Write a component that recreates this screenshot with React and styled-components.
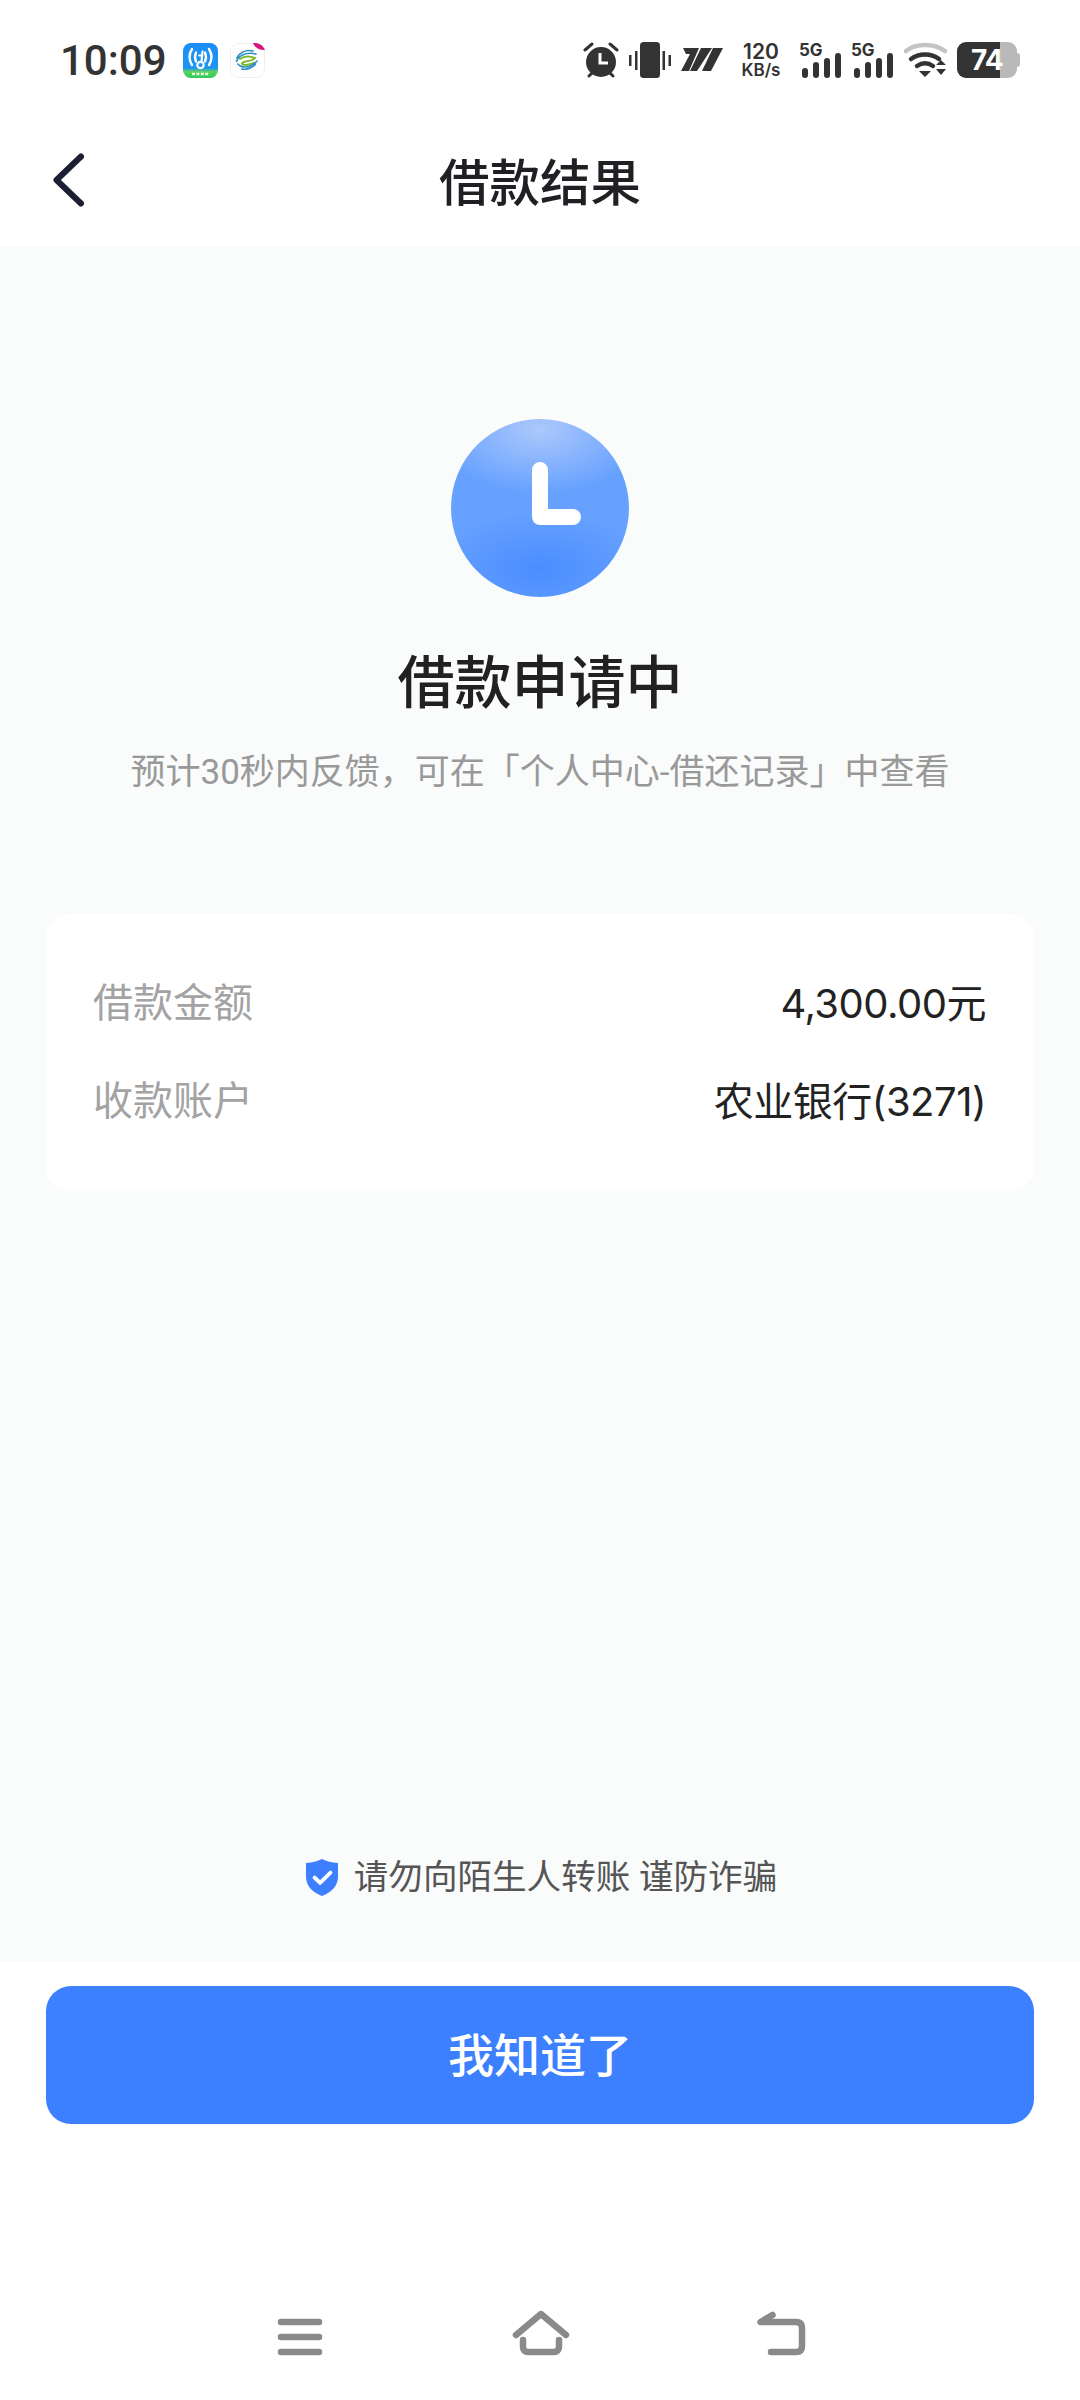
import React from "react";
import styled, { createGlobalStyle } from "styled-components";

const Global = createGlobalStyle`
  html, body { margin: 0; padding: 0; background: #fff; }
  * { box-sizing: border-box; }
  body { font-family: Roboto, "Noto Sans CJK SC", sans-serif; }
`;

const Page = styled.div`
  width: 1080px;
  height: 2400px;
  display: flex;
  flex-direction: column;
  overflow: hidden;
  background: #fff;
`;

const StatusBar = styled.div`
  height: 120px;
  padding: 0 60px;
  display: flex;
  align-items: center;
  justify-content: space-between;
`;

const StatusLeft = styled.div`
  display: flex;
  align-items: center;
`;

const Time = styled.span`
  font-family: Roboto, sans-serif;
  font-size: 42px;
  font-weight: 500;
  color: #333;
  width: 123px;
`;

const AppIcon = styled.svg`
  width: 35px;
  height: 35px;
  margin-right: 12px;
  display: block;
`;

const StatusRight = styled.div`
  display: flex;
  align-items: center;
`;

const StatusIcon = styled.svg`
  display: block;
  margin-left: ${(p) => p.$gap || 0}px;
  fill: #333;
`;

const Speed = styled.div`
  margin-left: 16px;
  width: 44px;
  display: flex;
  flex-direction: column;
  align-items: center;
  color: #333;
  font-family: Inter, Roboto, sans-serif;
  font-weight: 600;
`;

const SpeedValue = styled.span`
  font-size: 21px;
  line-height: 21px;
`;

const SpeedUnit = styled.span`
  font-size: 17px;
  line-height: 17px;
  white-space: nowrap;
`;

const Network = styled.div`
  position: relative;
  width: 42px;
  height: 36px;
  margin-left: ${(p) => p.$gap}px;
`;

const NetworkLabel = styled.span`
  position: absolute;
  left: 0;
  top: 0;
  color: #333;
  font-family: Inter, Roboto, sans-serif;
  font-size: 17px;
  line-height: 16px;
  font-weight: 700;
`;

const Battery = styled.div`
  margin-left: 10px;
  position: relative;
  width: 63px;
  height: 36px;
`;

const BatteryBody = styled.div`
  width: 60px;
  height: 36px;
  border-radius: 9px;
  background: linear-gradient(to right, #333 0 72%, #b9b9b9 72% 100%);
`;

const BatteryCap = styled.div`
  position: absolute;
  right: 0;
  top: 11px;
  width: 3px;
  height: 14px;
  border-radius: 0 3px 3px 0;
  background: #b9b9b9;
`;

const BatteryText = styled.span`
  position: absolute;
  left: 14px;
  top: 0;
  line-height: 36px;
  color: #fff;
  font-family: Inter, Roboto, sans-serif;
  font-weight: 700;
  font-size: 28px;
  letter-spacing: -1px;
`;

const NavBar = styled.div`
  height: 126px;
  position: relative;
  display: flex;
  align-items: center;
  justify-content: center;
  padding-bottom: 9px;
`;

const BackButton = styled.svg`
  position: absolute;
  left: 50px;
  top: 30px;
  width: 40px;
  height: 60px;
`;

const NavTitle = styled.h1`
  margin: 0;
  font-size: 50.500px;
  font-weight: 500;
  color: #1f2024;
`;

const Content = styled.main`
  flex: 1;
  background: #fafbfb;
  display: flex;
  flex-direction: column;
  align-items: center;
  padding: 173px 46px 0;
`;

const ClockBadge = styled.div`
  width: 178px;
  height: 178px;
  border-radius: 50%;
  background:
    radial-gradient(ellipse 60% 36% at 50% 6%, #acc8fb 0%, rgba(172, 200, 251, 0) 100%),
    radial-gradient(ellipse 62% 32% at 50% 84%, #4a8dff 0%, rgba(74, 141, 255, 0) 100%),
    #66a1ff;
  display: flex;
  align-items: center;
  justify-content: center;
`;

const ClockHands = styled.svg`
  width: 178px;
  height: 178px;
`;

const ResultTitle = styled.h2`
  margin: 52px 0 0;
  font-size: 57px;
  line-height: 70px;
  font-weight: 500;
  color: #212121;
`;

const ResultHint = styled.p`
  margin: 31px 0 0;
  font-size: 35px;
  line-height: 46px;
  font-weight: 400;
  color: #999;
  white-space: nowrap;
`;

const Card = styled.section`
  margin-top: 118px;
  width: 100%;
  height: 277px;
  border-radius: 24px;
  background: #fff;
  padding: 65px 48px 0 47px;
  display: flex;
  flex-direction: column;
  gap: 48px;
`;

const Row = styled.div`
  height: 50px;
  display: flex;
  align-items: center;
  justify-content: space-between;
  font-size: 40px;
  line-height: 50px;
`;

const RowLabel = styled.span`
  color: #a3a3a3;
`;

const RowValue = styled.span`
  color: #222;
  font-family: Inter, "Noto Sans CJK SC", sans-serif;
  letter-spacing: -0.5px;
`;

const Notice = styled.div`
  margin: auto 0 62px 3px;
  display: flex;
  align-items: center;
  gap: 16px;
  font-size: 34.600px;
  line-height: 46px;
  color: #555;
`;

const Shield = styled.svg`
  width: 32px;
  height: 37px;
`;

const Footer = styled.footer`
  height: 438px;
  padding: 24px 46px 0;
  display: flex;
  flex-direction: column;
  background: #fff;
`;

const PrimaryButton = styled.button`
  width: 100%;
  height: 138px;
  border: none;
  border-radius: 25px;
  background: #3c80ff;
  color: #fff;
  font-family: inherit;
  font-size: 46px;
  font-weight: 500;
  padding: 0 0 6px;
`;

const GestureBar = styled.nav`
  margin-top: 184px;
  margin-left: 1px;
  display: flex;
  justify-content: center;
  align-items: center;
  gap: 185px;
`;

const GestureIcon = styled.svg`
  width: ${(p) => p.$w}px;
  height: 52px;
  fill: none;
  stroke: #8a8a8a;
  stroke-width: 6.500;
  stroke-linecap: round;
  stroke-linejoin: round;
`;

const WifiKey = () => (
  <AppIcon viewBox="0 0 35 35">
    <defs>
      <linearGradient id="wk" x1="0" y1="0" x2="0" y2="1">
        <stop offset="0" stopColor="#1b8df5" />
        <stop offset="0.72" stopColor="#1e96f0" />
        <stop offset="0.82" stopColor="#5fd35a" />
        <stop offset="1" stopColor="#2cc95f" />
      </linearGradient>
    </defs>
    <rect width="35" height="35" rx="8" fill="url(#wk)" />
    <g fill="none" stroke="#fff" strokeLinecap="round">
      <path d="M9 6Q4 14 9 22" strokeWidth="2.400" />
      <path d="M26 6Q31 14 26 22" strokeWidth="2.400" />
      <path d="M13 9.500Q11 14 13 18.500" strokeWidth="2.400" />
      <path d="M22 9.500Q24 14 22 18.500" strokeWidth="2.400" />
      <circle cx="17.500" cy="22" r="3.200" strokeWidth="2.200" />
      <path d="M18.500 19L19.500 8.500M19.200 12.500h-3" strokeWidth="2.200" />
    </g>
    <path d="M9 31h17" stroke="#e8fbe2" strokeWidth="2.400" strokeDasharray="3 1.400" />
  </AppIcon>
);

const MobileLogo = () => (
  <AppIcon viewBox="0 0 35 35">
    <rect x="0.5" y="0.5" width="34" height="34" rx="8" fill="#fff" stroke="#eee" />
    <g fill="none" strokeLinecap="round">
      <path d="M7 15C9 10 16 6 23 8" stroke="#2a8dc9" strokeWidth="1.600" />
      <path d="M6.500 18.500C8 13 16 8.500 26 11" stroke="#2a8dc9" strokeWidth="1.600" />
      <path d="M10 16c4-3 10-3 15-1-3 4-10 2-13 5-1 2 6 3 12 0" stroke="#7dbb2e" strokeWidth="2" />
      <path d="M8 21c3 4 12 5 19-3" stroke="#2a8dc9" strokeWidth="1.600" />
      <path d="M11.500 26c5 1 11-1 14-5" stroke="#2a8dc9" strokeWidth="1.600" />
    </g>
    <path d="M23 0c5 0 9 1 12 7-5 0-10-2-12-7z" fill="#d9127f" />
  </AppIcon>
);

const FiveG = ({ gap }) => (
  <Network $gap={gap}>
    <NetworkLabel>5G</NetworkLabel>
    <StatusIcon width="42" height="36" viewBox="0 0 42 36">
      <rect x="3" y="26" width="6" height="10" rx="3" />
      <rect x="14" y="20" width="6" height="16" rx="3" />
      <rect x="25" y="16" width="6" height="20" rx="3" />
      <rect x="36" y="11" width="6" height="25" rx="3" />
    </StatusIcon>
  </Network>
);

export default function App() {
  return (
    <Page>
      <Global />
      <StatusBar>
        <StatusLeft>
          <Time>10:09</Time>
          <WifiKey />
          <MobileLogo />
        </StatusLeft>
        <StatusRight>
          <StatusIcon width="38" height="37" viewBox="0 0 38 37">
            <circle cx="19" cy="20" r="15" />
            <path d="M3 8l7-6M35 8l-7-6M7 34l3-3M31 34l-3-3" stroke="#333" strokeWidth="3" strokeLinecap="round" fill="none" />
            <path d="M18 11v10h8" stroke="#fff" strokeWidth="3" fill="none" />
          </StatusIcon>
          <StatusIcon $gap={9} width="42" height="37" viewBox="0 0 42 37">
            <rect x="11" y="0" width="20" height="36" rx="3.500" />
            <rect x="0" y="13" width="2.500" height="11" />
            <rect x="6" y="9" width="2.500" height="19" />
            <rect x="33.500" y="9" width="2.500" height="19" />
            <rect x="39.500" y="13" width="2.500" height="11" />
          </StatusIcon>
          <StatusIcon $gap={10} width="42" height="24" viewBox="0 0 42 24">
            <path d="M2 0h16L8 23H0L9 6H5z" />
            <path d="M20 0h11L16 23H9z" />
            <path d="M32 0h10L30 23h-9z" />
          </StatusIcon>
          <Speed>
            <SpeedValue>120</SpeedValue>
            <SpeedUnit>KB/s</SpeedUnit>
          </Speed>
          <FiveG gap={16} />
          <FiveG gap={10} />
          <StatusIcon $gap={11} width="43" height="36" viewBox="0 0 43 36">
            <g fill="none" strokeLinecap="round">
              <path d="M2 9C12 1 30 1 41 9" stroke="#c4c4c4" strokeWidth="4.500" />
              <path d="M7 17c8-6 20-6 28 0" stroke="#333" strokeWidth="4.500" />
              <path d="M13 24c5-3.500 11-3.500 16 0" stroke="#333" strokeWidth="4.500" />
            </g>
            <path d="M15 29h12l-6 6zM32 23l5-5 5 5zM32 27h10l-5 6z" />
          </StatusIcon>
          <Battery>
            <BatteryBody />
            <BatteryCap />
            <BatteryText>74</BatteryText>
          </Battery>
        </StatusRight>
      </StatusBar>

      <NavBar>
        <BackButton viewBox="0 0 40 60" fill="none" stroke="#1c1f33" strokeWidth="6" strokeLinecap="round" strokeLinejoin="round">
          <path d="M31 6.500 6.500 30 31 53.500" />
        </BackButton>
        <NavTitle>借款结果</NavTitle>
      </NavBar>

      <Content>
        <ClockBadge>
          <ClockHands viewBox="0 0 178 178" fill="none" stroke="#fff" strokeWidth="16" strokeLinecap="round" strokeLinejoin="round">
            <path d="M89 51v47h33" />
          </ClockHands>
        </ClockBadge>
        <ResultTitle>借款申请中</ResultTitle>
        <ResultHint>预计30秒内反馈，可在「个人中心-借还记录」中查看</ResultHint>
        <Card>
          <Row>
            <RowLabel>借款金额</RowLabel>
            <RowValue>4,300.00元</RowValue>
          </Row>
          <Row>
            <RowLabel>收款账户</RowLabel>
            <RowValue>农业银行(3271)</RowValue>
          </Row>
        </Card>
        <Notice>
          <Shield viewBox="0 0 34 38" preserveAspectRatio="none">
            <path d="M17 0c5 2.500 10 3.500 17 4v14c0 10-7 16-17 20C7 34 0 28 0 18V4c7-.5 12-1.500 17-4z" fill="#3c80ff" />
            <path d="M9 19l6 5.500L26 14" fill="none" stroke="#fff" strokeWidth="4" strokeLinecap="round" strokeLinejoin="round" />
          </Shield>
          请勿向陌生人转账 谨防诈骗
        </Notice>
      </Content>

      <Footer>
        <PrimaryButton>我知道了</PrimaryButton>
        <GestureBar>
          <GestureIcon $w={50} viewBox="0 0 50 52">
            <path d="M6 14h38M6 29h38M6 44h38" />
          </GestureIcon>
          <GestureIcon $w={62} viewBox="0 0 62 52">
            <path d="M6 27 31 6l25 21" />
            <path d="M13 32v7c0 3 2 5 5 5h26c3 0 5-2 5-5v-7" />
          </GestureIcon>
          <GestureIcon $w={50} viewBox="0 0 50 52">
            <path d="M15.500 7 3.500 14H39c4 0 6 2 6 6v18c0 4-2 6-6 6H14" />
          </GestureIcon>
        </GestureBar>
      </Footer>
    </Page>
  );
}
